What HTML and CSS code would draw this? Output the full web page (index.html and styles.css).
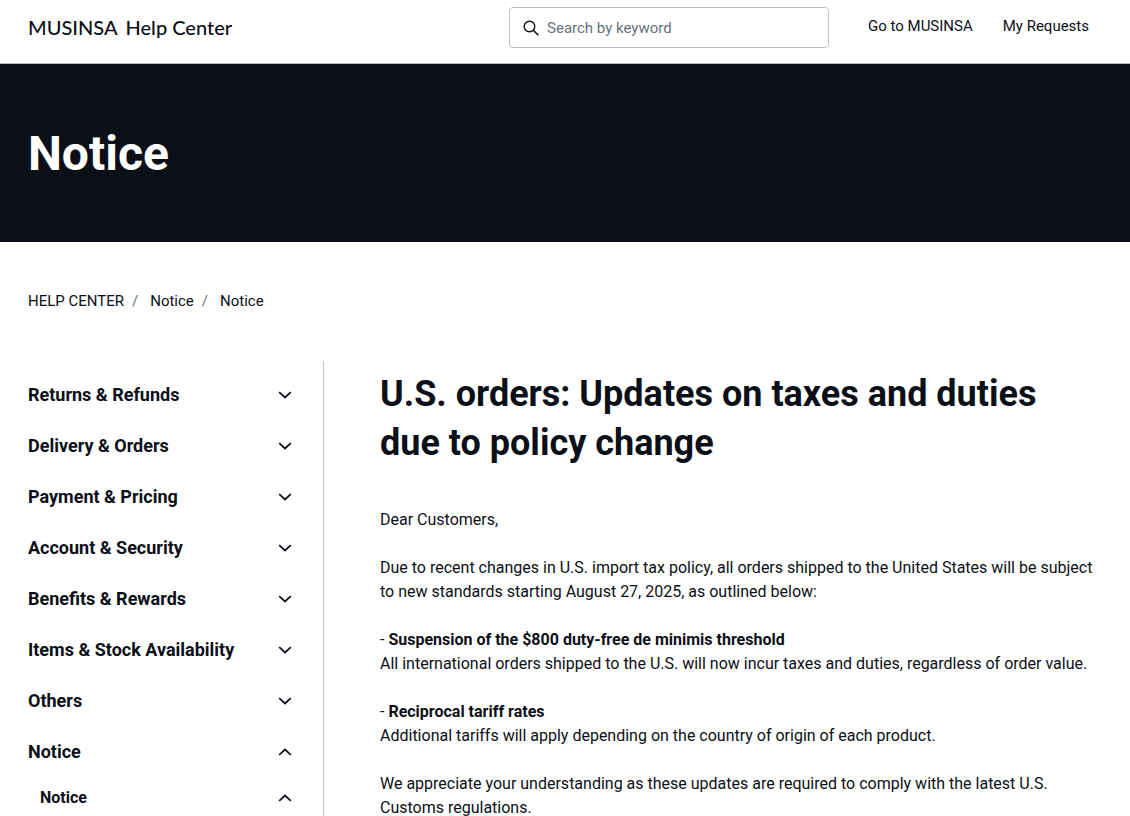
FILE: index.html
```
<!DOCTYPE html>
<html lang="en">
  <head>
    <meta charset="UTF-8" />
    <meta name="viewport" content="width=device-width, initial-scale=1" />
    <title>U.S. orders: Updates on taxes and duties due to policy change</title>
    <link rel="stylesheet" href="styles.css">
  </head>
  <body>
    <!-- shared chevron, flipped in css for open sections -->
    <svg class="sprite" aria-hidden="true">
      <symbol id="chevron" viewBox="0 0 14 14">
        <path d="M1.200 4.200 7 9.500l5.800-5.300" fill="none" stroke="currentColor" stroke-width="1.700" />
      </symbol>
    </svg>

    <header class="header">
      <a href="#" class="logo"><span>MUSINSA</span> <span>Help Center</span></a>
      <form class="search" role="search">
        <svg class="search-icon" viewBox="0 0 16 16" aria-hidden="true">
          <circle cx="6.500" cy="6.500" r="5.300" fill="none" stroke="currentColor" stroke-width="1.400" />
          <path d="M10.300 10.300 15.300 15.300" stroke="currentColor" stroke-width="1.600" />
        </svg>
        <input type="search" id="query" placeholder="Search by keyword" aria-label="Search by keyword" />
      </form>
      <nav class="user-nav">
        <a href="#">Go to MUSINSA</a>
        <a href="#">My Requests</a>
      </nav>
    </header>

    <section class="hero">
      <h2>Notice</h2>
    </section>

    <nav aria-label="Breadcrumb">
      <ol class="breadcrumbs">
        <li><a href="#">HELP CENTER</a></li>
        <li><a href="#">Notice</a></li>
        <li><a href="#">Notice</a></li>
      </ol>
    </nav>

    <main class="container">
      <aside class="sidebar">
        <button class="category">Returns &amp; Refunds <svg class="chevron"><use href="#chevron" /></svg></button>
        <button class="category">Delivery &amp; Orders <svg class="chevron"><use href="#chevron" /></svg></button>
        <button class="category">Payment &amp; Pricing <svg class="chevron"><use href="#chevron" /></svg></button>
        <button class="category">Account &amp; Security <svg class="chevron"><use href="#chevron" /></svg></button>
        <button class="category">Benefits &amp; Rewards <svg class="chevron"><use href="#chevron" /></svg></button>
        <button class="category">Items &amp; Stock Availability <svg class="chevron"><use href="#chevron" /></svg></button>
        <button class="category">Others <svg class="chevron"><use href="#chevron" /></svg></button>
        <button class="category" aria-expanded="true">Notice <svg class="chevron"><use href="#chevron" /></svg></button>
        <button class="category section" aria-expanded="true">Notice <svg class="chevron"><use href="#chevron" /></svg></button>
      </aside>

      <article class="article">
        <h1>U.S. orders: Updates on taxes and duties due to policy change</h1>
        <p>Dear Customers,</p>
        <p>
          Due to recent changes in U.S. import tax policy, all orders shipped to the United States will be subject to
          new standards starting August 27, 2025, as outlined below:
        </p>
        <p>
          - <strong>Suspension of the $800 duty-free de minimis threshold</strong><br />
          All international orders shipped to the U.S. will now incur taxes and duties, regardless of order value.
        </p>
        <p>
          - <strong>Reciprocal tariff rates</strong><br />
          Additional tariffs will apply depending on the country of origin of each product.
        </p>
        <p>
          We appreciate your understanding as these updates are required to comply with the latest U.S. Customs
          regulations.
        </p>
      </article>
    </main>
  </body>
</html>
```
FILE: styles.css
```
:root {
  --ink: #0b0f17;
  --line: #bfc1c4;
  --gutter: 28px;
}

* {
  box-sizing: border-box;
}

body {
  margin: 0;
  font-family: Roboto, "Liberation Sans", sans-serif;
  font-size: 16px;
  line-height: 24px;
  color: var(--ink);
  background: #ffffff;
}

a {
  color: inherit;
  text-decoration: none;
}
a:hover {
  text-decoration: underline;
}

.sprite {
  display: none;
}

/* header */
.header {
  display: flex;
  align-items: flex-start;
  height: 64px;
  padding: 7px 41px 0 var(--gutter);
  border-bottom: 1px solid var(--line);
}

.logo {
  display: flex;
  gap: 8px;
  margin-right: auto;
  font-family: Lato, Roboto, sans-serif;
  font-size: 20px;
  font-weight: 500;
  line-height: 40px;
}
.logo:hover {
  text-decoration: none;
}

.search {
  display: flex;
  align-items: center;
  gap: 8px;
  width: 320px;
  height: 41px;
  padding: 0 13px;
  border: 1px solid var(--line);
  border-radius: 4px;
}
.search-icon {
  flex: none;
  width: 16px;
  height: 16px;
}
.search input {
  flex: 1;
  min-width: 0;
  padding: 0;
  border: 0;
  outline: 0;
  font: inherit;
  font-size: 15px;
  background: transparent;
}
.search input::placeholder {
  color: #68737d;
}

.user-nav {
  display: flex;
  gap: 30px;
  margin-left: 39px;
  font-size: 15px;
  line-height: 38px;
}

/* page title band */
.hero {
  padding: 61px var(--gutter) 59px;
  color: #ffffff;
  background: var(--ink);
}
.hero h2 {
  margin: 0;
  font-size: 48px;
  line-height: 58px;
}

.breadcrumbs {
  display: flex;
  margin: 47px var(--gutter) 48px;
  padding: 0;
  list-style: none;
  font-size: 15px;
}
.breadcrumbs li + li::before {
  content: "/";
  margin: 0 12px 0 8px;
  color: #68737d;
}

.container {
  display: flex;
  padding: 0 var(--gutter);
}

/* sidebar */
.sidebar {
  flex: none;
  width: 296px;
  padding: 8px 31px 0 0;
  border-right: 1px solid var(--line);
}
.category {
  display: flex;
  justify-content: space-between;
  align-items: center;
  width: 100%;
  padding: 15px 0;
  border: 0;
  font-family: inherit;
  font-size: 18px;
  font-weight: 700;
  line-height: 21px;
  text-align: left;
  color: inherit;
  background: none;
  cursor: pointer;
}
.section {
  padding: 10px 0 10px 12px;
  font-size: 16px;
}
.chevron {
  width: 14px;
  height: 14px;
}
.category[aria-expanded="true"] .chevron {
  transform: rotate(180deg);
}

/* article */
.article {
  flex: 1;
  padding: 9px 0 24px 56px;
}
.article h1 {
  margin: 0 0 40px;
  font-size: 36px;
  line-height: 49px;
}
.article p {
  margin: 0 0 24px;
}

@media (max-width: 768px) {
  .header {
    height: auto;
    flex-wrap: wrap;
    padding-bottom: 12px;
  }
  .container {
    flex-direction: column;
  }
  .sidebar {
    width: 100%;
    padding-right: 0;
    border-right: 0;
  }
  .article {
    padding-left: 0;
  }
}
```
